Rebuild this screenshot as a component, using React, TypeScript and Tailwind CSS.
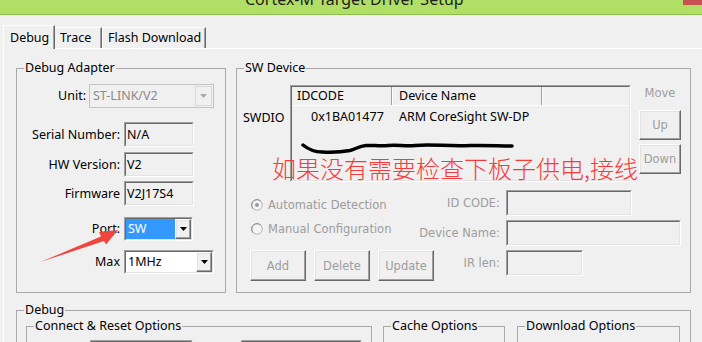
import React from "react";

const sunkenOuter =
  "border border-t-[#a0a0a0] border-l-[#a0a0a0] border-r-white border-b-white";
const sunkenInner =
  "border border-t-[#696969] border-l-[#696969] border-r-[#e3e3e3] border-b-[#e3e3e3]";
const raised =
  "border border-t-white border-l-white border-r-[#696969] border-b-[#696969] shadow-[inset_-1px_-1px_0_#a0a0a0,inset_1px_1px_0_#e3e3e3]";
const dv = "font-['DejaVu_Sans',sans-serif] text-[11.5px]";

function Sunken({
  className = "",
  inner = "",
  children,
}: {
  className?: string;
  inner?: string;
  children?: React.ReactNode;
}) {
  return (
    <div className={`${sunkenOuter} ${className}`}>
      <div className={`${sunkenInner} h-full w-full ${inner}`}>{children}</div>
    </div>
  );
}

function Group({
  title,
  className = "",
  children,
}: {
  title: string;
  className?: string;
  children?: React.ReactNode;
}) {
  return (
    <div className={`border border-[#a9a9a9] ${className}`}>
      <div className="-mt-[9px] ml-[7px] h-[16px] w-fit whitespace-nowrap bg-[#f0f0f0] px-[1px] leading-[16px]">
        {title}
      </div>
      {children}
    </div>
  );
}

function Arrow({ color = "#000" }: { color?: string }) {
  return (
    <svg width="7" height="4" viewBox="0 0 7 4">
      <polygon points="0,0 7,0 3.5,4" fill={color} />
    </svg>
  );
}

function Btn({ className = "", children }: { className?: string; children?: React.ReactNode }) {
  return (
    <div className={`${raised} ${dv} flex items-center justify-center text-[#9d9d9d] ${className}`}>
      {children}
    </div>
  );
}

function Radio({ checked }: { checked?: boolean }) {
  return (
    <svg width="12" height="12" viewBox="0 0 12 12">
      <circle cx="6" cy="6" r="5.3" fill="#f4f4f4" stroke="#b4b4b4" strokeWidth="1" />
      <path d="M2.2 9.8 A5.3 5.3 0 0 1 9.8 2.2" stroke="#8e8e8e" strokeWidth="1" fill="none" />
      {checked && <circle cx="6" cy="6" r="2" fill="#9a9a9a" />}
    </svg>
  );
}

function Field({ value, className = "" }: { value?: string; className?: string }) {
  return (
    <Sunken className={className} inner="flex items-center pl-[1px] bg-[#f0f0f0]">
      {value}
    </Sunken>
  );
}

export default function App() {
  return (
    <div className="relative h-[342px] w-[702px] overflow-hidden bg-[#f0f0f0] font-['Noto_Sans',sans-serif] text-[12.5px] leading-[16px] text-black">
      {/* title bar */}
      <div className="flex h-[15px] items-start overflow-hidden border-b border-[#8cc152] bg-[#b1df66]">
        <div className="-mt-[11px] ml-[245px] whitespace-nowrap text-[16px] leading-[20px] text-[#1e1e1e]">
          Cortex-M Target Driver Setup
        </div>
        <div className="ml-auto h-[5px] w-[19px] bg-[#c75050]" />
      </div>

      {/* tabs */}
      <div className="mt-[10px] flex h-[23px] items-end pl-[3px]">
        <div className="relative z-10 -mb-px flex h-[24px] w-[52px] items-center border-l border-t border-r border-l-white border-t-white border-r-[#696969] bg-[#f0f0f0] pl-[6px] shadow-[inset_-1px_0_0_#a0a0a0]">
          Debug
        </div>
        <div className="flex h-[21px] w-[47px] items-center border-t border-r border-t-white border-r-[#696969] pl-[5px] shadow-[inset_-1px_0_0_#a0a0a0]">
          Trace
        </div>
        <div className="flex h-[21px] w-[104px] items-center border-l border-t border-r border-l-white border-t-white border-r-[#696969] pl-[5px] shadow-[inset_-1px_0_0_#a0a0a0]">
          Flash Download
        </div>
      </div>

      {/* panel */}
      <div className="ml-[3px] h-[300px] border-l border-t border-white pl-[12px] pt-[19px]">
        <div className="flex gap-[10px]">
          {/* Debug Adapter */}
          <Group title="Debug Adapter" className="h-[225px] w-[210px]">
            <div className="mt-[8px] flex h-[24px] items-center">
              <span className="w-[72px] pr-[3px] text-right">Unit:</span>
              <div className="flex h-[24px] w-[125px] border border-[#c4c4c4] p-[1px]">
                <div className="flex flex-1 items-center pl-[2px] text-[#8a8a8a]">ST-LINK/V2</div>
                <div className="flex w-[17px] items-center justify-center border border-[#d9d9d9] bg-[#f0f0f0]">
                  <Arrow color="#a8a8a8" />
                </div>
              </div>
            </div>
            <div className="mt-[14px] flex h-[25px] items-center">
              <span className="w-[107px] pr-[4px] text-right">Serial Number:</span>
              <Field value="N/A" className="h-[25px] w-[70px]" />
            </div>
            <div className="mt-[5px] flex h-[25px] items-center">
              <span className="w-[107px] pr-[4px] text-right">HW Version:</span>
              <Field value="V2" className="h-[25px] w-[70px]" />
            </div>
            <div className="mt-[4px] flex h-[25px] items-center">
              <span className="w-[107px] pr-[4px] text-right">Firmware</span>
              <Field value="V2J17S4" className="h-[25px] w-[70px]" />
            </div>
            <div className="mt-[11px] flex h-[24px] items-center">
              <span className="w-[107px] pr-[4px] text-right">Port:</span>
              <Sunken className="h-[24px] w-[69px]" inner="flex bg-white">
                <div className="flex flex-1 items-center bg-[#3399ff] pl-[2px] text-white">SW</div>
                <div className={`${raised} flex w-[16px] items-center justify-center bg-[#f0f0f0]`}>
                  <Arrow />
                </div>
              </Sunken>
            </div>
            <div className="mt-[9px] flex h-[24px] items-center">
              <span className="w-[107px] pr-[4px] text-right">Max</span>
              <Sunken className="h-[24px] w-[90px]" inner="flex bg-white">
                <div className="flex flex-1 items-center pl-[2px]">1MHz</div>
                <div className={`${raised} flex w-[16px] items-center justify-center bg-[#f0f0f0]`}>
                  <Arrow />
                </div>
              </Sunken>
            </div>
          </Group>

          {/* SW Device */}
          <Group title="SW Device" className="h-[225px] w-[455px]">
            <div className="mt-[9px] flex">
              <div className="w-[53px] pl-[6px] pt-[25px]">SWDIO</div>
              <Sunken className="h-[97px] w-[341px]" inner="flex flex-col">
                <div className="flex h-[19px] border-b border-b-white">
                  <div className="flex w-[100px] items-center border-r border-r-[#a0a0a0] pl-[5px] shadow-[1px_0_0_#fff]">
                    IDCODE
                  </div>
                  <div className="flex w-[150px] items-center border-r border-r-[#a0a0a0] pl-[7px] shadow-[1px_0_0_#fff]">
                    Device Name
                  </div>
                  <div className="flex-1" />
                </div>
                <div className="flex h-[22px] items-center">
                  <div className="w-[100px] pl-[19px]">0x1BA01477</div>
                  <div className="pl-[7px]">ARM CoreSight SW-DP</div>
                </div>
              </Sunken>
              <div className="ml-[8px] flex w-[42px] flex-col">
                <div className={`${dv} text-center leading-[16px] text-[#9d9d9d]`}>Move</div>
                <Btn className="mt-[9px] h-[30px]">Up</Btn>
                <Btn className="mt-[4px] h-[30px]">Down</Btn>
              </div>
            </div>

            <div className="mt-[8px] flex h-[26px]">
              <div className={`${dv} flex h-[16px] w-[175px] items-center gap-[5px] pl-[14px] mt-[7px] text-[#9d9d9d]`}>
                <Radio checked />
                <span>Automatic Detection</span>
              </div>
              <div className={`${dv} flex w-[88px] items-center justify-end text-[#9d9d9d]`}>ID CODE:</div>
              <Field className="ml-[6px] h-[26px] w-[126px]" />
            </div>
            <div className="mt-[4px] flex h-[26px]">
              <div className={`${dv} mt-[1px] flex h-[16px] w-[175px] items-center gap-[5px] pl-[14px] text-[#9d9d9d]`}>
                <Radio />
                <span>Manual Configuration</span>
              </div>
              <div className={`${dv} flex w-[88px] items-center justify-end text-[#9d9d9d]`}>Device Name:</div>
              <Field className="ml-[6px] h-[26px] w-[175px]" />
            </div>
            <div className="mt-[4px] flex items-start">
              <div className="flex w-[200px] gap-[8px] pl-[13px]">
                <Btn className="h-[31px] w-[56px]">Add</Btn>
                <Btn className="h-[31px] w-[56px]">Delete</Btn>
                <Btn className="h-[31px] w-[56px]">Update</Btn>
              </div>
              <div className={`${dv} flex h-[26px] w-[63px] items-center justify-end text-[#9d9d9d]`}>IR len:</div>
              <Field className="ml-[6px] h-[26px] w-[77px]" />
            </div>
          </Group>
        </div>

        {/* Debug */}
        <Group title="Debug" className="mt-[17px] h-[60px] w-[675px]">
          <div className="mt-[8px] flex">
            <Group title="Connect & Reset Options" className="ml-[9px] h-[40px] w-[346px]">
              <div className="mt-[6px] flex">
                <Sunken className="ml-[63px] h-[22px] w-[103px]" inner="bg-white" />
                <Sunken className="ml-[48px] h-[22px] w-[121px]" inner="bg-white" />
              </div>
            </Group>
            <Group title="Cache Options" className="ml-[11px] h-[40px] w-[122px]" />
            <Group title="Download Options" className="ml-[12px] h-[40px] w-[163px]" />
          </div>
        </Group>
      </div>

      {/* annotations */}
      <div className="pointer-events-none absolute left-[272px] top-[156px] whitespace-nowrap font-['Noto_Sans_CJK_SC',sans-serif] text-[24px] font-light leading-[24px] text-[#f83a3a]">
        如果没有需要检查下板子供电,接线
      </div>
      <svg
        className="pointer-events-none absolute left-0 top-0"
        width="702"
        height="342"
        viewBox="0 0 702 342"
      >
        <path
          d="M303 145 C308 149 314 152 322 152 C332 152.5 342 152 350 150.5 C356 149 359 146 366 145.5 C372 145 380 146.5 388 145.5 C398 144.5 405 146.5 415 145.5 C430 144 450 146.5 470 145.5 C485 145 500 146 512 146"
          stroke="#000"
          strokeWidth="3.5"
          fill="none"
          strokeLinecap="round"
        />
        <polygon points="40.5,262 101,236.5 99,232 118,230 106,244.5 104,241" fill="#f0453d" />
      </svg>
    </div>
  );
}
